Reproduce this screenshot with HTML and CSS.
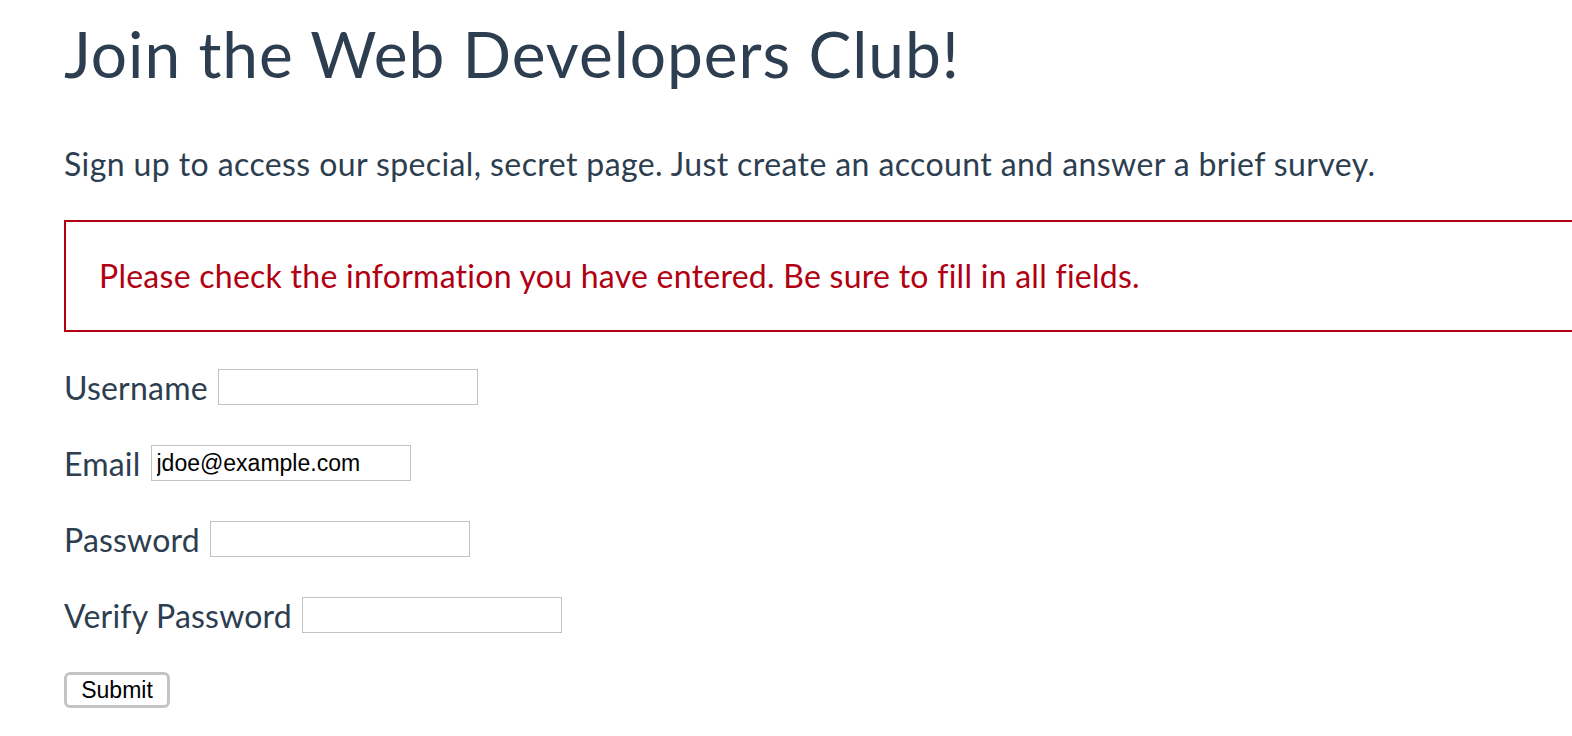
FILE: index.html
```html
<!DOCTYPE html>
<html lang="en">
<head>
<meta charset="utf-8">
<title>Join the Web Developers Club!</title>
<link rel="stylesheet" href="styles.css">
</head>
<body>
<main class="page">
  <h1 class="title">Join the Web Developers Club!</h1>
  <p class="lead">Sign up to access our special, secret page. Just create an account and answer a brief survey.</p>
  <div class="error">Please check the information you have entered. Be sure to fill in all fields.</div>
  <form class="form">
    <div class="field"><label for="username">Username</label> <input id="username" type="text"></div>
    <div class="field"><label for="email">Email</label> <input id="email" type="email" value="jdoe@example.com"></div>
    <div class="field"><label for="password">Password</label> <input id="password" type="password"></div>
    <div class="field"><label for="verify">Verify Password</label> <input id="verify" type="password"></div>
    <div class="actions"><button type="submit" class="submit">Submit</button></div>
  </form>
</main>
</body>
</html>
```

FILE: styles.css
```css
html, body {
  margin: 0;
  padding: 0;
  overflow-x: hidden;
  background: #fff;
}
body {
  font-family: Lato, "Noto Sans", sans-serif;
  font-variant-ligatures: none;
  color: #2c3e50;
}
.page {
  padding: 0 0 0 64px;
}
.title {
  margin: 0;
  padding-top: 16px;
  font-size: 64px;
  font-weight: 400;
  line-height: 76px;
  letter-spacing: 0.95px;
}
.lead {
  margin: 50px 0 0 0;
  font-size: 32px;
  line-height: 44px;
  letter-spacing: 0.4px;
}
.error {
  margin-top: 34px;
  width: 100%;
  border: 2px solid #b00012;
  padding: 32px 33px;
  color: #b00012;
  font-size: 32px;
  line-height: 44px;
  letter-spacing: 0.26px;
}
.form {
  margin-top: 37px;
}
.field {
  display: flex;
  align-items: center;
  gap: 10px;
  height: 36px;
  margin-bottom: 40px;
  font-size: 32px;
  letter-spacing: 0.2px;
}
.field input {
  box-sizing: border-box;
  width: 260px;
  height: 36px;
  border: 1px solid #c2c2c2;
  padding: 0 5px;
  font-family: "Liberation Sans", Arial, sans-serif;
  font-size: 23px;
  letter-spacing: 0;
  color: #000;
  outline: none;
}
.actions {
  margin-top: -1px;
}
.submit {
  box-sizing: border-box;
  width: 106px;
  height: 36px;
  border: 3px solid #c4c4c4;
  border-radius: 6px;
  background: #fff;
  font-family: "Liberation Sans", Arial, sans-serif;
  font-size: 23px;
  color: #000;
  padding: 0;
}
```
